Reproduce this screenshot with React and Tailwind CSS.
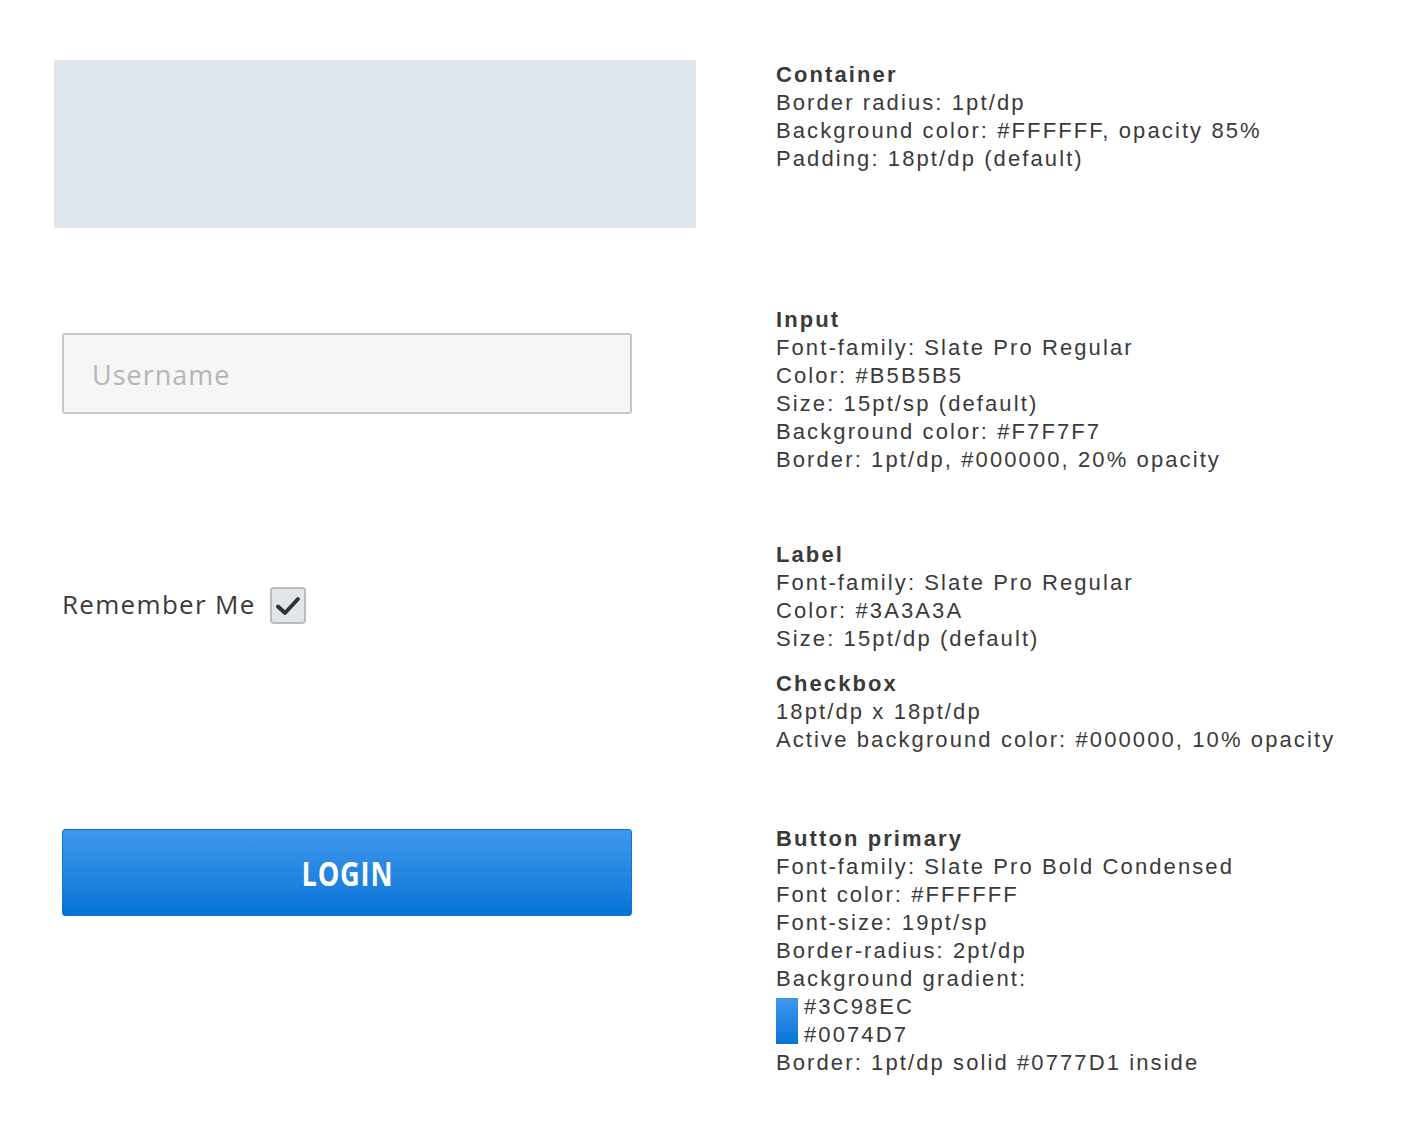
import React from 'react';

const specFont = { fontFamily: '"Liberation Sans", Arial, sans-serif' };
const slateFont = { fontFamily: '"Open Sans", "Noto Sans", sans-serif' };

const Spec = ({ title, lines }) => (
  <div>
    <p className="font-bold">{title}</p>
    {lines.map((line, i) => (
      <p key={i}>{line}</p>
    ))}
  </div>
);

function App() {
  return (
    <div className="min-h-screen bg-white text-[#3a3a3a]">
      <div className="pt-[60px] pl-[54px]">
        {/* Container */}
        <div className="flex">
          <div className="w-[642px] h-[168px] bg-[#dfe5ec] rounded-[2px] shrink-0" />
          <div className="ml-[80px] mt-px text-[22px] leading-[28px] tracking-[2.1px]" style={specFont}>
            <Spec
              title="Container"
              lines={["Border radius: 1pt/dp", "Background color: #FFFFFF, opacity 85%", "Padding: 18pt/dp (default)"]}
            />
          </div>
        </div>

        {/* Input */}
        <div className="flex mt-[78px]">
          <div className="w-[722px] shrink-0 pl-[8px] pt-[27px]">
            <div
              className="w-[570px] h-[81px] bg-[#f6f6f6] border-2 border-[#c8c8c8] rounded-[3px] flex items-center pl-[28px] pt-[3px] text-[27px] tracking-[1px] text-[#b5b5b5]"
              style={slateFont}
            >
              Username
            </div>
          </div>
          <div className="text-[22px] leading-[28px] tracking-[2.1px]" style={specFont}>
            <Spec
              title="Input"
              lines={[
                "Font-family: Slate Pro Regular",
                "Color: #B5B5B5",
                "Size: 15pt/sp (default)",
                "Background color: #F7F7F7",
                "Border: 1pt/dp, #000000, 20% opacity",
              ]}
            />
          </div>
        </div>

        {/* Label + checkbox */}
        <div className="flex mt-[67px]">
          <div className="w-[722px] shrink-0 pl-[8px] pt-[46px]">
            <div className="flex items-center gap-[14px]">
              <span className="text-[26px] tracking-[1.3px] text-[#3a3a3a] -mt-[2px]" style={slateFont}>
                Remember Me
              </span>
              <div className="w-[36px] h-[37px] rounded-[4px] border-2 border-[#bcbcbc] bg-[#e2e5ea] flex items-center justify-center">
                <svg width="26" height="22" viewBox="0 0 26 22">
                  <path d="M3 11.5 L10 18 L23 4" fill="none" stroke="#333" strokeWidth="4" strokeLinecap="round" strokeLinejoin="round" />
                </svg>
              </div>
            </div>
          </div>
          <div className="text-[22px] leading-[28px] tracking-[2.1px]" style={specFont}>
            <Spec
              title="Label"
              lines={["Font-family: Slate Pro Regular", "Color: #3A3A3A", "Size: 15pt/dp (default)"]}
            />
            <div className="mt-[17px]">
              <Spec
                title="Checkbox"
                lines={["18pt/dp x 18pt/dp", "Active background color: #000000, 10% opacity"]}
              />
            </div>
          </div>
        </div>

        {/* Button */}
        <div className="flex mt-[71px]">
          <div className="w-[722px] shrink-0 pl-[8px] pt-[4px]">
            <button className="w-[570px] h-[87px] rounded-[3px] border border-[#0777d1] bg-gradient-to-b from-[#3c98ec] to-[#0074d7] text-white flex items-center justify-center">
              <span
                className="inline-block text-[34px] font-bold tracking-[1px] scale-x-[0.8] mt-[2px]"
                style={slateFont}
              >
                LOGIN
              </span>
            </button>
          </div>
          <div className="text-[22px] leading-[28px] tracking-[2.1px]" style={specFont}>
            <p className="font-bold">Button primary</p>
            <p>Font-family: Slate Pro Bold Condensed</p>
            <p>Font color: #FFFFFF</p>
            <p>Font-size: 19pt/sp</p>
            <p>Border-radius: 2pt/dp</p>
            <p>Background gradient:</p>
            <div className="flex">
              <div className="w-[22px] h-[46px] mt-[5px] bg-gradient-to-b from-[#3c98ec] to-[#0074d7]" />
              <div className="ml-[6px]">
                <p>#3C98EC</p>
                <p>#0074D7</p>
              </div>
            </div>
            <p>Border: 1pt/dp solid #0777D1 inside</p>
          </div>
        </div>
      </div>
    </div>
  );
}

export default App;
